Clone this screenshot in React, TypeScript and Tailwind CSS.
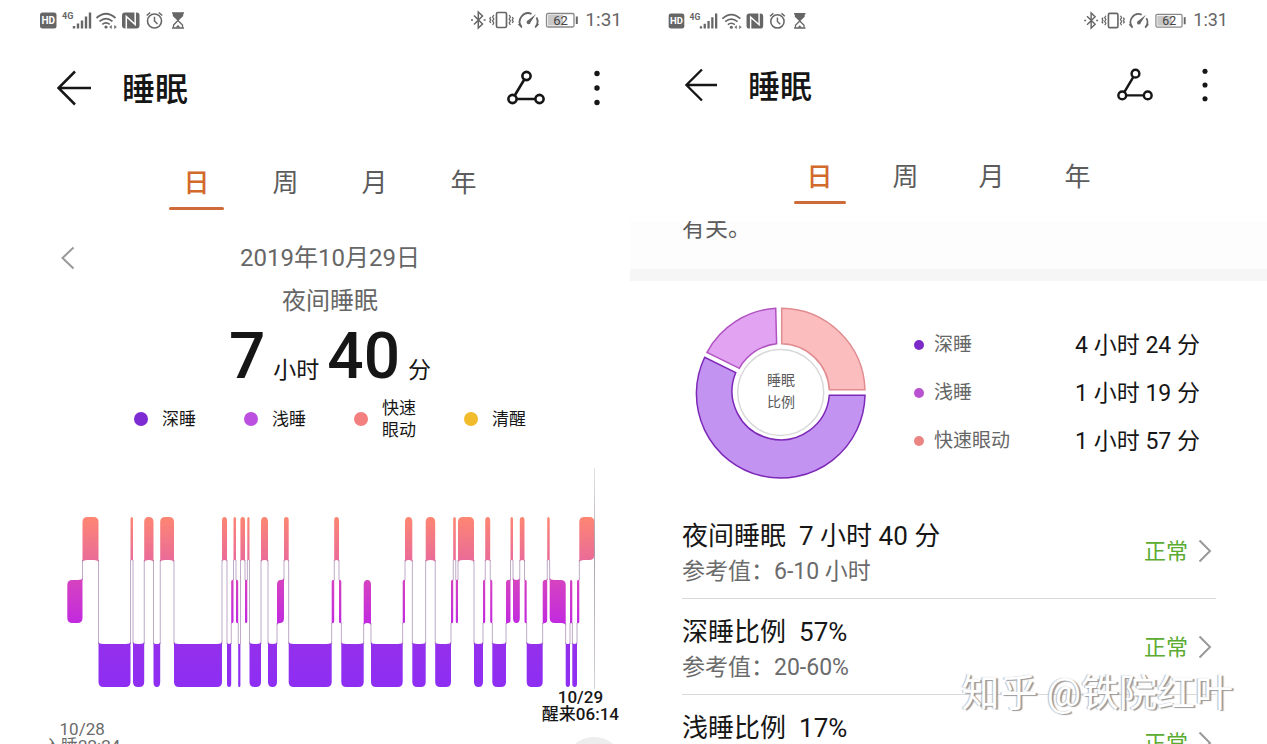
import { useState } from "react";
import clsx from "clsx";

type Stage = "rem" | "light" | "deep";

// Each entry is a stage and the x position where it ends
const CHART_START = 67.3;
const stages: [Stage, number][] = [
  ["light", 82.5], ["rem", 98.5], ["deep", 130.5], ["rem", 133], ["deep", 144.2],
  ["rem", 153.5], ["deep", 160.2], ["rem", 174], ["deep", 222], ["rem", 227],
  ["deep", 231.2], ["light", 233.5], ["rem", 236], ["light", 238.2], ["deep", 240.4],
  ["rem", 245], ["light", 247.3], ["rem", 249.5], ["deep", 261], ["rem", 268],
  ["deep", 277], ["light", 284], ["rem", 288.7], ["deep", 331.7], ["light", 334.2],
  ["rem", 339], ["light", 341.3], ["deep", 363.7], ["light", 371], ["deep", 402.7],
  ["light", 405], ["rem", 412.3], ["deep", 425.7], ["rem", 435.2], ["deep", 451],
  ["light", 453.2], ["rem", 455.8], ["light", 458], ["rem", 474], ["deep", 483],
  ["light", 485.2], ["rem", 490.2], ["light", 492.3], ["deep", 506], ["light", 510.5],
  ["rem", 513], ["light", 519.8], ["rem", 524.5], ["light", 526.7], ["deep", 542.7],
  ["light", 547.2], ["rem", 549.7], ["light", 565.7], ["deep", 570], ["light", 572.3],
  ["deep", 577], ["light", 579.3], ["rem", 594.3],
];

const stageTop: Record<Stage, number> = { rem: 52, light: 115, deep: 179 };
const BAR_HEIGHT = 43;

const bars = stages.map(([stage, end], i) => ({
  stage,
  start: i === 0 ? CHART_START : stages[i - 1][1],
  end,
  prev: stages[i - 1]?.[0],
  next: stages[i + 1]?.[0],
}));

// Corners round off on the free side and flare towards the neighbouring stage
function barPath({ stage, start, end, prev, next }: (typeof bars)[number]) {
  const top = stageTop[stage];
  const bottom = top + BAR_HEIGHT;
  const rx = Math.min(5, (end - start) / 2);
  const ry = Math.min(5, rx * 1.4);
  const side = (other?: Stage) => {
    const up = other !== undefined && stageTop[other] < top;
    const down = other !== undefined && stageTop[other] > top;
    return { top: up ? top - ry / 2 : top + ry, bottom: down ? bottom + ry / 2 : bottom - ry };
  };
  const l = side(prev);
  const r = side(next);
  return [
    `M${start} ${l.top}`,
    `Q${start} ${top} ${start + rx} ${top}`,
    `L${end - rx} ${top}`,
    `Q${end} ${top} ${end} ${r.top}`,
    `L${end} ${r.bottom}`,
    `Q${end} ${bottom} ${end - rx} ${bottom}`,
    `L${start + rx} ${bottom}`,
    `Q${start} ${bottom} ${start} ${l.bottom}`,
    "Z",
  ].join(" ");
}

const legend = [
  { label: ["深睡"], dot: "bg-[#7d2bd3]" },
  { label: ["浅睡"], dot: "bg-[#bb4fdf]" },
  { label: ["快速", "眼动"], dot: "bg-[#f37f7e]" },
  { label: ["清醒"], dot: "bg-[#f2bb2c]" },
];

const breakdown = [
  { label: "深睡", value: "4 小时 24 分", dot: "bg-[#7d2bc8]" },
  { label: "浅睡", value: "1 小时 19 分", dot: "bg-[#b952d0]" },
  { label: "快速眼动", value: "1 小时 57 分", dot: "bg-[#ea8583]" },
];

const metrics = [
  { name: "夜间睡眠", value: "7 小时 40 分", range: "6-10 小时" },
  { name: "深睡比例", value: "57%", range: "20-60%" },
  { name: "浅睡比例", value: "17%", range: "<55%" },
];

function StatusBar({ className, compact }: { className: string; compact?: boolean }) {
  return (
    <div className={clsx("flex h-10 items-center justify-between text-[#666]", className)}>
      <svg
        viewBox="0 0 146 20"
        className={compact ? "h-[19px] w-[140px]" : "h-5 w-[146px]"}
        fill="none"
        stroke="currentColor"
      >
        <rect x="0" y="2.5" width="16.5" height="16" rx="2.5" fill="currentColor" stroke="none" />
        <text x="8.2" y="14.2" fontSize="10" fontWeight="700" textAnchor="middle" fill="#fff" stroke="none">HD</text>
        <text x="22" y="9" fontSize="9" fontWeight="700" fill="currentColor" stroke="none">4G</text>
        <path d="M34 16v2.5M38 13.5v5M42 10.5v8M46 6.5v12M50 2.5v16" strokeWidth="2.4" />
        <path d="M56.5 8q9.5-8.5 19 0M59.5 11.3q6.5-5.5 13 0M62.3 14.4q3.7-3 7.4 0" strokeWidth="1.7" />
        <circle cx="66" cy="17" r="1.6" fill="currentColor" stroke="none" />
        <path d="M69.5 17l2-1.5v3zM76.5 17l-2-1.5v3z" fill="currentColor" strokeWidth=".5" />
        <rect x="82" y="2.5" width="17.5" height="16" rx="3" fill="currentColor" stroke="none" />
        <path d="M86.300 19V6.500L95.200 14.500V2" stroke="#fff" strokeWidth="1.500" />
        <circle cx="114.500" cy="11" r="7" strokeWidth="1.600" />
        <path d="M114.500 6.800V11l3 3M106.700 5.500l3.500-3M122.300 5.500l-3.500-3" strokeWidth="1.500" />
        <path d="M132 3h12M132 18h12" strokeWidth="1.600" />
        <path d="M132.800 3h10.400v3L138 11l-5.200-5z" fill="currentColor" stroke="none" />
        <path d="M133.500 17.500V15l4.500-4.500 4.500 4.500v2.500" strokeWidth="1.300" />
        <path d="M135.500 17.500l2.500-2.500 2.500 2.500z" fill="currentColor" stroke="none" />
      </svg>
      <div className="flex items-center gap-1.5">
        <svg
          viewBox="0 0 108 20"
          className={compact ? "h-[19px] w-[103px]" : "h-5 w-[108px]"}
          fill="none"
          stroke="currentColor"
        >
          <path d="M3 5.500l8.500 8.500L7.300 18V2l4.200 4L3 14.500" strokeWidth="1.500" />
          <path d="M0 10h2M12.600 10h2" strokeWidth="1.700" />
          <rect x="25.500" y="2.500" width="10" height="15" rx="1.500" strokeWidth="1.700" />
          <path d="M22.800 5l-1.200 2 1.200 2-1.200 2 1.200 2-1.200 2M19.800 7l-1 1.500 1 1.500-1 1.500 1 1.500M38.200 5l1.200 2-1.200 2 1.200 2-1.200 2 1.200 2M41.200 7l1 1.500-1 1.500 1 1.500-1 1.500" strokeWidth="1.300" />
          <path d="M50.500 16.800a8.500 8.500 0 0 1 10-13M65.500 7.500a8.500 8.500 0 0 1-.8 9.300" strokeWidth="1.800" />
          <path d="M47.500 14l3.500 3.500M67.500 14L64 17.500" strokeWidth="1.500" />
          <path d="M65 4l-5.400 8.300a2 2 0 1 1-2.500-2z" fill="currentColor" stroke="none" />
          <rect x="75.500" y="3.500" width="27.500" height="13.500" rx="1.500" stroke="#888" strokeWidth="1.300" />
          <rect x="77" y="5" width="15" height="10.500" fill="#c8c8c8" stroke="none" />
          <path d="M105.800 6.500v7.500" strokeWidth="2" />
          <text x="89.500" y="15" fontSize="13" textAnchor="middle" fill="#444" stroke="none">62</text>
        </svg>
        <span className={clsx("leading-5", compact ? "text-lg" : "text-[19px]")}>1:31</span>
      </div>
    </div>
  );
}

function Header({ className, compact }: { className: string; compact?: boolean }) {
  return (
    <header className={clsx("flex items-center justify-between text-[#161616]", className)}>
      <div className="flex items-center gap-[31px]">
        <button aria-label="返回">
          <svg
            viewBox="0 0 34 36"
            className={compact ? "h-[34px] w-8" : "h-9 w-[34px]"}
            fill="none"
            stroke="currentColor"
            strokeWidth="2.5"
          >
            <path d="M34 18H2M18 1.500L1.500 18 18 34.500" />
          </svg>
        </button>
        <h1 className={clsx("pt-1 leading-10 font-medium", compact ? "text-[32px]" : "text-[33px]")}>睡眠</h1>
      </div>
      <div className="flex items-center gap-[49px]">
        <button aria-label="分享">
          <svg
            viewBox="0 0 38 36"
            className={compact ? "h-[34px] w-9" : "h-9 w-[38px]"}
            fill="none"
            stroke="currentColor"
            strokeWidth="2.600"
          >
            <circle cx="19.500" cy="6" r="4.100" />
            <circle cx="5.500" cy="29" r="4.100" />
            <circle cx="32.500" cy="29" r="4.100" />
            <path d="M17.300 9.500L7.700 25.500M9.600 29h18.800" />
          </svg>
        </button>
        <button aria-label="更多">
          <svg viewBox="0 0 6 36" className={compact ? "h-[34px] w-1.5" : "h-9 w-1.5"} fill="currentColor">
            <circle cx="3" cy="3.500" r="2.700" />
            <circle cx="3" cy="18" r="2.700" />
            <circle cx="3" cy="32.500" r="2.700" />
          </svg>
        </button>
      </div>
    </header>
  );
}

function Tabs({ className }: { className: string }) {
  const [active, setActive] = useState("日");

  return (
    <nav className="flex justify-center gap-[34px] pt-[29px]">
      {["日", "周", "月", "年"].map((tab) => (
        <button
          key={tab}
          onClick={() => setActive(tab)}
          className={clsx(
            "flex flex-col items-center gap-1.5 text-[26px] leading-9",
            className,
            tab === active ? "font-medium text-[#d2692d]" : "text-[#5c5c5c]"
          )}
        >
          {tab}
          <span className={clsx("h-[3px] w-full rounded-full", tab === active && "bg-[#cf6a3a]")} />
        </button>
      ))}
    </nav>
  );
}

function SleepChart() {
  return (
    <svg viewBox="30 0 600 224" className="mt-6 block w-full" role="img" aria-label="睡眠阶段">
      <defs>
        <linearGradient id="stages" gradientUnits="userSpaceOnUse" x1="0" y1="52" x2="0" y2="222">
          <stop offset="0" stopColor="#fd8672" />
          <stop offset="0.25" stopColor="#ea6c98" />
          <stop offset="0.37" stopColor="#d643c0" />
          <stop offset="0.62" stopColor="#c22ade" />
          <stop offset="0.74" stopColor="#9430ec" />
          <stop offset="1" stopColor="#8e2ef3" />
        </linearGradient>
        <linearGradient id="marker" gradientUnits="userSpaceOnUse" x1="0" y1="0" x2="0" y2="224">
          <stop offset="0" stopColor="#8a7a90" stopOpacity="0.3" />
          <stop offset="0.4" stopColor="#8a7a90" />
          <stop offset="1" stopColor="#8a7a90" stopOpacity="0.5" />
        </linearGradient>
      </defs>
      <g fill="url(#stages)">
        {bars.map((bar) => (
          <path key={bar.start} d={barPath(bar)} />
        ))}
      </g>
      <g fill="#8f6a9c">
        {bars.slice(1).map((bar) => {
          const from = Math.min(stageTop[bar.stage], stageTop[bar.prev]) + BAR_HEIGHT;
          const to = Math.max(stageTop[bar.stage], stageTop[bar.prev]);
          return (
            <rect key={bar.start} x={bar.start - 0.4} y={from} width="0.8" height={to - from} opacity="0.7" />
          );
        })}
      </g>
      <rect x="594" y="3" width="1" height="221" fill="url(#marker)" opacity="0.7" />
    </svg>
  );
}

function DayScreen() {
  return (
    <section className="pl-[30px]">
      <StatusBar className="pr-2 pl-2.5" />
      <Header className="h-24 pr-[30px] pl-[27px]" />
      <Tabs className="w-[55px]" />

      <div className="mt-[30px] grid grid-cols-[1fr_auto_1fr] items-center px-[31px] text-[#666]">
        <button aria-label="前一天" className="w-fit">
          <svg viewBox="0 0 14 24" className="h-6 w-3.5" fill="none" stroke="#999" strokeWidth="2">
            <path d="M12.500 1.500L1.500 12l11 10.500" />
          </svg>
        </button>
        <time dateTime="2019-10-29" className="text-2xl leading-9">2019年10月29日</time>
      </div>
      <h2 className="mt-[7px] text-center text-2xl leading-9 text-[#666]">夜间睡眠</h2>
      <p className="mt-1.5 flex items-baseline justify-center gap-2 text-[23px] leading-none text-[#161616]">
        <span className="text-[64px] leading-[64px] font-medium">7</span>
        小时
        <span className="text-[64px] leading-[64px] font-medium">40</span>
        分
      </p>

      <ul className="mt-2 flex items-center justify-center gap-12 text-[17px] leading-[22px] text-[#161616]">
        {legend.map((item) => (
          <li key={item.label[0]} className="flex items-center gap-3.5">
            <span className={clsx("size-3.5 rounded-full", item.dot)} />
            <span>
              {item.label.map((line) => (
                <span key={line} className="block">{line}</span>
              ))}
            </span>
          </li>
        ))}
      </ul>

      <SleepChart />
      <div className="relative flex items-start justify-between pr-[11px] pl-3.5 text-center text-[17px] leading-[17px]">
        <p className="mt-8 text-[#6b6b6b]">
          10/28
          <br />
          入睡22:24
        </p>
        <p className="font-medium text-[#161616]">
          10/29
          <br />
          醒来06:14
        </p>
        <span className="absolute top-12 right-1.5 size-[60px] rounded-full border-[7px] border-[#ededed] bg-white" />
      </div>
    </section>
  );
}

function RatioChart() {
  return (
    <div className="grid shrink-0 place-items-center">
      <svg viewBox="0 0 172 172" className="col-start-1 row-start-1 size-[172px]" strokeWidth="1.500">
        <path d="M86.700 1.300A84.300 84.300 0 0 1 170 82.700H134.300A48.700 48.700 0 0 0 86.700 36.700Z" fill="#fcbdbe" stroke="#e08c90" />
        <path d="M170 88.300A84.300 84.300 0 1 1 9.700 50.300L40.700 65.700A48.700 48.700 0 1 0 134.300 88.300Z" fill="#c293f1" stroke="#7d28b8" />
        <path d="M12 45.300A84.300 84.300 0 0 1 80.700 1.300L81.600 36.700A48.700 48.700 0 0 0 44.300 61.300Z" fill="#e2a4f2" stroke="#b052c0" />
        <circle cx="85.700" cy="85.400" r="43" fill="#fff" stroke="#d9d9d9" />
      </svg>
      <p className="col-start-1 row-start-1 pb-1 text-center text-sm leading-[22px] text-[#5c5c5c]">
        睡眠
        <br />
        比例
      </p>
    </div>
  );
}

function DetailScreen() {
  return (
    <section>
      <StatusBar compact className="pr-[39px] pl-[38px]" />
      <Header compact className="h-[90px] pr-[59px] pl-[55px]" />
      <Tabs className="w-[52px]" />

      <div className="mt-[17px] h-12 overflow-hidden bg-[#fdfdfd] pl-[52px]">
        <p className="-mt-2.5 text-[23px] leading-9 text-[#5c5c5c]">有关。</p>
      </div>
      <div className="h-3 bg-[#f6f6f6]" />

      <div className="flex items-center gap-[47px] pt-[26px] pr-[67px] pl-[65px]">
        <RatioChart />
        <dl className="flex-1">
          {breakdown.map((item) => (
            <div key={item.label} className="flex h-12 items-center justify-between">
              <dt className="flex items-center gap-2.5 text-[19px] text-[#666]">
                <span className={clsx("size-2.5 rounded-full", item.dot)} />
                {item.label}
              </dt>
              <dd className="pt-0.5 text-[23px] text-[#161616]">{item.value}</dd>
            </div>
          ))}
        </dl>
      </div>

      <ul className="mt-6 pr-[51px] pl-[52px]">
        {metrics.map((metric) => (
          <li key={metric.name} className="flex items-center justify-between border-b border-[#d9d9d9] pt-[15px] pb-2">
            <div className="leading-9">
              <h3 className="flex gap-[13px] text-[26px] text-[#161616]">
                <span>{metric.name}</span>
                <span>{metric.value}</span>
              </h3>
              <p className="text-[23px] text-[#6b6b6b]">参考值：{metric.range}</p>
            </div>
            <a href="#" className="flex items-center gap-2.5 pr-1 pb-1.5 text-[22px] text-[#5aab2f]">
              正常
              <svg viewBox="0 0 14 24" className="h-6 w-3.5" fill="none" stroke="#999" strokeWidth="2">
                <path d="M1.500 1.500L12 12 1.500 22.500" />
              </svg>
            </a>
          </li>
        ))}
      </ul>
    </section>
  );
}

export default function App() {
  return (
    <main className="relative grid h-screen grid-cols-[630fr_637fr] overflow-hidden bg-white font-['Roboto','Noto_Sans_CJK_SC',sans-serif]">
      <DayScreen />
      <DetailScreen />
      <p className="absolute right-[34px] bottom-6 text-[38px] leading-[54px] text-white [text-shadow:2px_1px_1px_#999,-1px_0_1px_#bbb]">
        知乎 @铁院红叶
      </p>
    </main>
  );
}
